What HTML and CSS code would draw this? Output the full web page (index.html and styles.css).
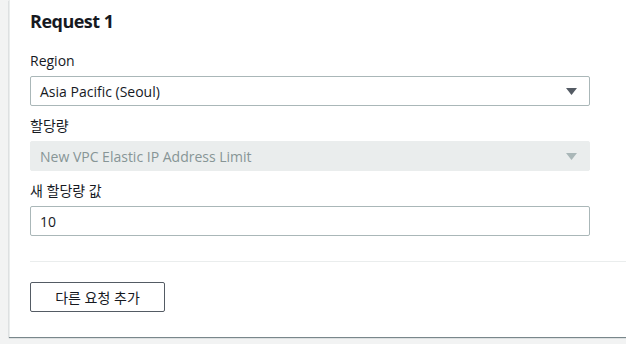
FILE: index.html
```html
<!DOCTYPE html>
<html lang="ko">
<head>
<meta charset="utf-8">
<link rel="stylesheet" href="styles.css">
</head>
<body>
<div class="card">
  <h2 class="title">Request 1</h2>
  <div class="field">
    <label class="label">Region</label>
    <div class="select">
      <span>Asia Pacific (Seoul)</span>
      <svg class="caret" width="11" height="7" viewBox="0 0 11 7"><path d="M0 0h11L5.5 7z" fill="#545b64"/></svg>
    </div>
  </div>
  <div class="field">
    <label class="label">할당량</label>
    <div class="select disabled">
      <span>New VPC Elastic IP Address Limit</span>
      <svg class="caret" width="11" height="7" viewBox="0 0 11 7"><path d="M0 0h11L5.5 7z" fill="#aab7b8"/></svg>
    </div>
  </div>
  <div class="field">
    <label class="label">새 할당량 값</label>
    <div class="select input"><span>10</span></div>
  </div>
  <div class="divider"></div>
  <div class="actions">
    <button class="btn">다른 요청 추가</button>
  </div>
</div>
</body>
</html>
```

FILE: styles.css
```css
html, body {
  margin: 0;
  padding: 0;
  background: #f2f3f3;
  overflow: hidden;
  height: 344px;
}
body {
  font-family: "Open Sans", "Noto Sans CJK KR", sans-serif;
  color: #16191f;
  font-size: 14px;
}
.card {
  margin-left: 9px;
  width: 617px;
  background: #fff;
  border-left: 1px solid #eaeded;
  box-shadow: 0 1px 1px 0 rgba(0, 28, 36, 0.5);
  padding: 8px 0 25px 20px;
  box-sizing: border-box;
}
.title {
  margin: 0 0 16px;
  font-size: 18px;
  font-weight: 700;
  line-height: 26px;
  letter-spacing: -0.5px;
}
.field {
  width: 560px;
  margin-bottom: 9px;
}
.label {
  display: block;
  line-height: 22px;
  margin-bottom: 4px;
}
.select {
  height: 30px;
  box-sizing: border-box;
  border: 1px solid #aab7b8;
  border-radius: 2px;
  display: flex;
  align-items: center;
  justify-content: space-between;
  padding: 0 12px 0 9px;
}
.select.disabled {
  background: #eaeded;
  border-color: #eaeded;
  color: #879596;
}
.caret { display: block; }
.divider {
  height: 1px;
  background: #eaeded;
  margin: 25px 0 20px;
}
.actions { display: flex; }
.btn {
  font-family: inherit;
  font-size: 14px;
  color: #16191f;
  background: #fff;
  border: 1px solid #545b64;
  border-radius: 2px;
  height: 30px;
  width: 135px;
  padding: 0;
}
```
